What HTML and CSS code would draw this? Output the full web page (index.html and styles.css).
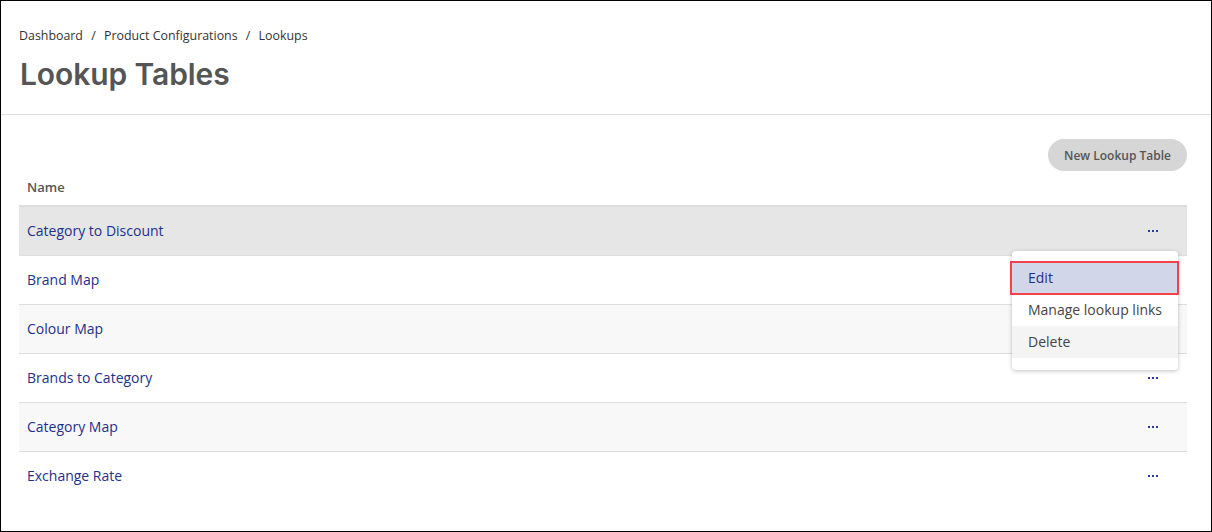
FILE: index.html
```html
<!DOCTYPE html>
<html lang="en">

<head>
	<meta charset="utf-8" />
	<meta name="viewport" content="width=device-width, initial-scale=1" />
	<title>Lookup Tables</title>
	<link rel="stylesheet" href="styles.css">
</head>

<body>
	<div class="frame">
		<div class="page-header">
			<div class="breadcrumb">
				<a href="#">Dashboard</a>
				<span class="sep">/</span>
				<a href="#">Product Configurations</a>
				<span class="sep">/</span>
				<span>Lookups</span>
			</div>
			<h1>Lookup Tables</h1>
		</div>

		<div class="content">
			<div class="toolbar">
				<button type="button" class="btn-new">New Lookup Table</button>
			</div>

			<div class="table-wrap">
				<table class="lookups">
					<thead>
						<tr>
							<th>Name</th>
							<th></th>
						</tr>
					</thead>
					<tbody>
						<tr class="hover">
							<td><a href="#">Category to Discount</a></td>
							<td class="actions"><span class="dots"></span></td>
						</tr>
						<tr>
							<td><a href="#">Brand Map</a></td>
							<td class="actions"><span class="dots"></span></td>
						</tr>
						<tr class="alt">
							<td><a href="#">Colour Map</a></td>
							<td class="actions"><span class="dots"></span></td>
						</tr>
						<tr>
							<td><a href="#">Brands to Category</a></td>
							<td class="actions"><span class="dots"></span></td>
						</tr>
						<tr class="alt">
							<td><a href="#">Category Map</a></td>
							<td class="actions"><span class="dots"></span></td>
						</tr>
						<tr>
							<td><a href="#">Exchange Rate</a></td>
							<td class="actions"><span class="dots"></span></td>
						</tr>
					</tbody>
				</table>

				<ul class="menu">
					<li class="selected">Edit</li>
					<li>Manage lookup links</li>
					<li class="hovered">Delete</li>
				</ul>
			</div>
		</div>
	</div>
</body>

</html>
```

FILE: styles.css
```css
html,
body {
	margin: 0;
	padding: 0;
}
body {
	font-family: "Open Sans", Arial, sans-serif;
	color: #333333;
	background-color: #ffffff;
}
.frame {
	box-sizing: border-box;
	height: 532px;
	border: solid 1px #000000;
	overflow: hidden;
}
.page-header {
	padding: 26px 18px 0 18px;
	height: 87px;
	border-bottom: solid 1px #dddddd;
}
.breadcrumb {
	font-size: 12.4px;
	line-height: 18px;
	color: #333333;
}
.breadcrumb a {
	color: #333333;
	text-decoration: none;
}
.breadcrumb .sep {
	margin: 0 5px;
}
h1 {
	margin: 9px 0 0 1px;
	font-family: Inter, "Open Sans", sans-serif;
	font-weight: 600;
	font-size: 30px;
	line-height: 40px;
	letter-spacing: -0.1px;
	color: #555555;
}
.content {
	padding: 24px 24px 0 18px;
}
.toolbar {
	display: flex;
	justify-content: flex-end;
}
.btn-new {
	height: 32px;
	padding: 0 16px;
	border: none;
	border-radius: 16px;
	background-color: #d6d6d6;
	color: #555555;
	font-family: "Open Sans", Arial, sans-serif;
	font-size: 12px;
	font-weight: 600;
}
.table-wrap {
	position: relative;
}
.lookups {
	width: 100%;
	border-collapse: collapse;
	font-size: 14px;
}
.lookups th {
	text-align: left;
	font-size: 13px;
	font-weight: 600;
	color: #555555;
	padding: 0 8px 9px 8px;
	height: 25px;
	vertical-align: bottom;
	border-bottom: solid 2px #dddddd;
}
.lookups td {
	height: 46px;
	padding: 0 8px 2px 8px;
	border-bottom: solid 1px #dddddd;
}
.lookups tbody tr:last-child td {
	border-bottom: none;
}
.lookups tr.hover td {
	background-color: #e6e6e6;
}
.lookups tr.alt td {
	background-color: #f8f8f8;
}
.lookups a {
	color: #1f2f8a;
	text-decoration: none;
}
.lookups .actions {
	text-align: right;
	padding-right: 29px;
	width: 40px;
}
.dots {
	display: inline-block;
	width: 10px;
	height: 2px;
	margin-bottom: 4px;
	background: linear-gradient(to right, #2a3a9a 0, #2a3a9a 2px, transparent 2px, transparent 4px, #2a3a9a 4px, #2a3a9a 6px, transparent 6px, transparent 8px, #2a3a9a 8px, #2a3a9a 10px);
}
.menu {
	position: absolute;
	left: 993px;
	top: 80px;
	width: 166px;
	margin: 0;
	padding: 11px 0 12px 0;
	list-style: none;
	background-color: #ffffff;
	border-radius: 4px;
	box-shadow: 0 1px 4px rgba(0, 0, 0, 0.25);
	font-size: 14px;
}
.menu li {
	height: 32px;
	line-height: 32px;
	padding: 0 16px;
	color: #444444;
	white-space: nowrap;
}
.menu li.selected {
	background-color: #d1d7e8;
	color: #1f2f8a;
	outline: solid 2px #f4404c;
	outline-offset: -1px;
	margin: 0 0 0 -1px;
	padding-left: 17px;
}
.menu li.hovered {
	background-color: #f4f4f4;
}
```
